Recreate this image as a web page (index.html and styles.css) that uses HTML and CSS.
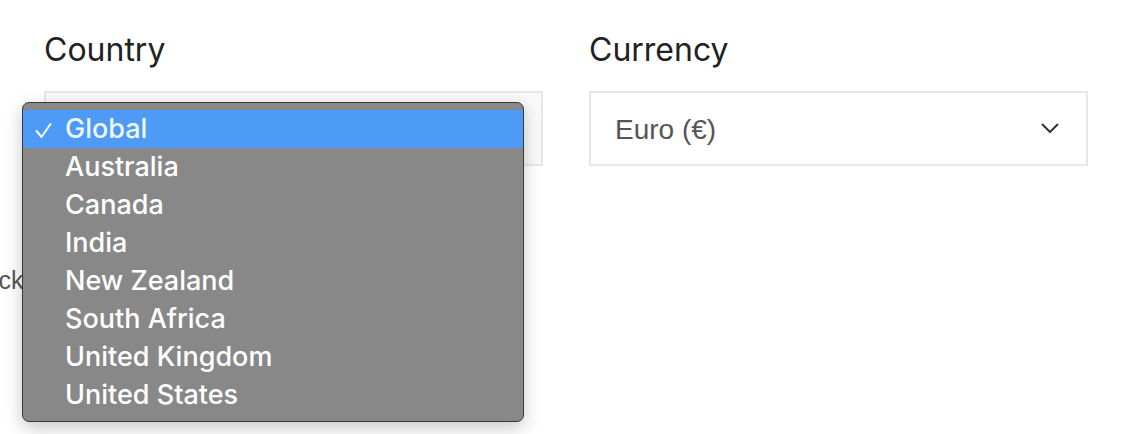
FILE: index.html
```html
<!DOCTYPE html>
<html lang="en">
<head>
<meta charset="utf-8">
<title>Settings</title>
<link rel="stylesheet" href="styles.css">
</head>
<body>
<div class="page">
  <div class="fields">
    <div class="field">
      <div class="label">Country</div>
      <div class="select select-open"></div>
    </div>
    <div class="field">
      <div class="label">Currency</div>
      <div class="select">
        <span class="value">Euro (€)</span>
        <svg class="chev" width="18" height="11" viewBox="0 0 18 11"><path d="M1.5 1.5 L9 9 L16.5 1.5" fill="none" stroke="#333" stroke-width="2" stroke-linecap="round" stroke-linejoin="round"/></svg>
      </div>
    </div>
  </div>
  <p class="note">Back to checkout</p>
  <ul class="menu">
    <li class="item selected"><svg class="check" width="17" height="17" viewBox="0 0 17 17"><path d="M1.5 9 L6.5 15 L15.5 2" fill="none" stroke="#f2f8ff" stroke-width="2" stroke-linecap="round" stroke-linejoin="round"/></svg>Global</li>
    <li class="item">Australia</li>
    <li class="item">Canada</li>
    <li class="item">India</li>
    <li class="item">New Zealand</li>
    <li class="item">South Africa</li>
    <li class="item">United Kingdom</li>
    <li class="item">United States</li>
  </ul>
</div>
</body>
</html>
```
FILE: styles.css
```css
html, body {
  margin: 0;
  padding: 0;
  background: #fff;
  overflow: hidden;
}
.page {
  position: relative;
  width: 1124px;
  height: 434px;
  font-family: "Liberation Sans", Arial, sans-serif;
}
.fields {
  display: flex;
  gap: 46px;
  padding: 30px 0 0 44px;
}
.field {
  width: 499px;
  display: flex;
  flex-direction: column;
  gap: 21px;
}
.label {
  font-family: Inter, "Liberation Sans", sans-serif;
  font-size: 32px;
  line-height: 40px;
  color: #222;
}
.select {
  box-sizing: border-box;
  height: 75px;
  border: 2px solid #e8e6e6;
  background: #fff;
  display: flex;
  align-items: center;
  justify-content: space-between;
  padding: 0 27px 0 24px;
}
.select-open {
  background: #f9f9f9;
}
.value {
  font-size: 28px;
  color: #555;
  padding-top: 2px;
}
.chev {
  display: block;
}
.note {
  margin: 0;
  position: absolute;
  left: -32px;
  top: 266px;
  font-size: 25px;
  color: #555;
  white-space: nowrap;
}
.menu {
  position: absolute;
  left: 22px;
  top: 102px;
  width: 502px;
  height: 320px;
  box-sizing: border-box;
  margin: 0;
  padding: 7px 0 0;
  list-style: none;
  background: #888888;
  border: 1px solid #3a3a3a;
  border-radius: 7px;
  box-shadow: 0 6px 18px rgba(0,0,0,0.22);
}
.item {
  position: relative;
  height: 38px;
  line-height: 38px;
  padding-left: 42px;
  font-family: Inter, "Liberation Sans", sans-serif;
  font-weight: 500;
  font-size: 27px;
  color: #fff;
}
.item.selected {
  background: #4d9bf7;
  color: #eef6ff;
}
.check {
  position: absolute;
  left: 12px;
  top: 12px;
}
```
